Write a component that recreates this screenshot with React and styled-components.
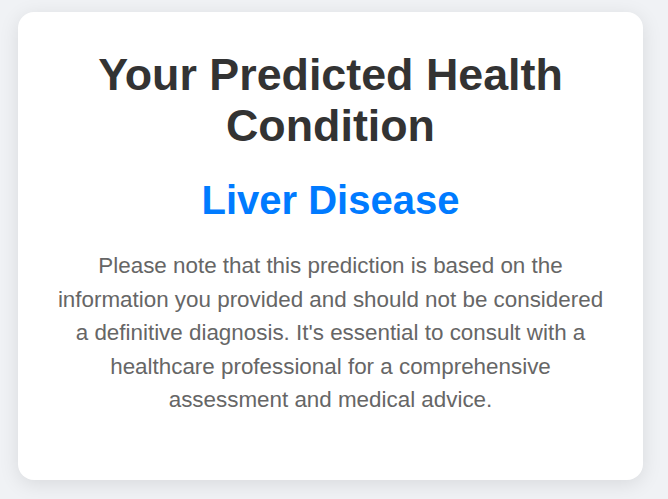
import React from 'react'
import styled, { createGlobalStyle } from 'styled-components'

const GlobalStyle = createGlobalStyle`
  html, body {
    margin: 0;
    padding: 0;
    background: #f0f2f5;
    font-family: 'Liberation Sans', Arial, sans-serif;
  }
`

const Page = styled.div`
  display: flex;
  align-items: flex-start;
  padding: 12px 0 20px 18px;
`

const Card = styled.div`
  width: 625px;
  box-sizing: border-box;
  background: #fff;
  border-radius: 16px;
  box-shadow: 0 4px 20px rgba(0, 0, 0, 0.1);
  padding: 37px 32px 40px;
  text-align: center;
`

const Title = styled.h1`
  margin: 0 0 27px;
  font-size: 44.8px;
  font-weight: 700;
  line-height: normal;
  color: #333;
`

const Result = styled.h2`
  margin: 0 0 26px;
  font-size: 40px;
  font-weight: 700;
  line-height: normal;
  color: #007bff;
`

const Note = styled.p`
  margin: 0 0 23px;
  font-size: 22.4px;
  line-height: 1.5;
  color: #666;
`

const App = () => (
  <>
    <GlobalStyle />
    <Page>
      <Card>
        <Title>Your Predicted Health Condition</Title>
        <Result>Liver Disease</Result>
        <Note>
          Please note that this prediction is based on the information you provided and
          should not be considered a definitive diagnosis. It's essential to consult with a
          healthcare professional for a comprehensive assessment and medical advice.
        </Note>
      </Card>
    </Page>
  </>
)

export default App
